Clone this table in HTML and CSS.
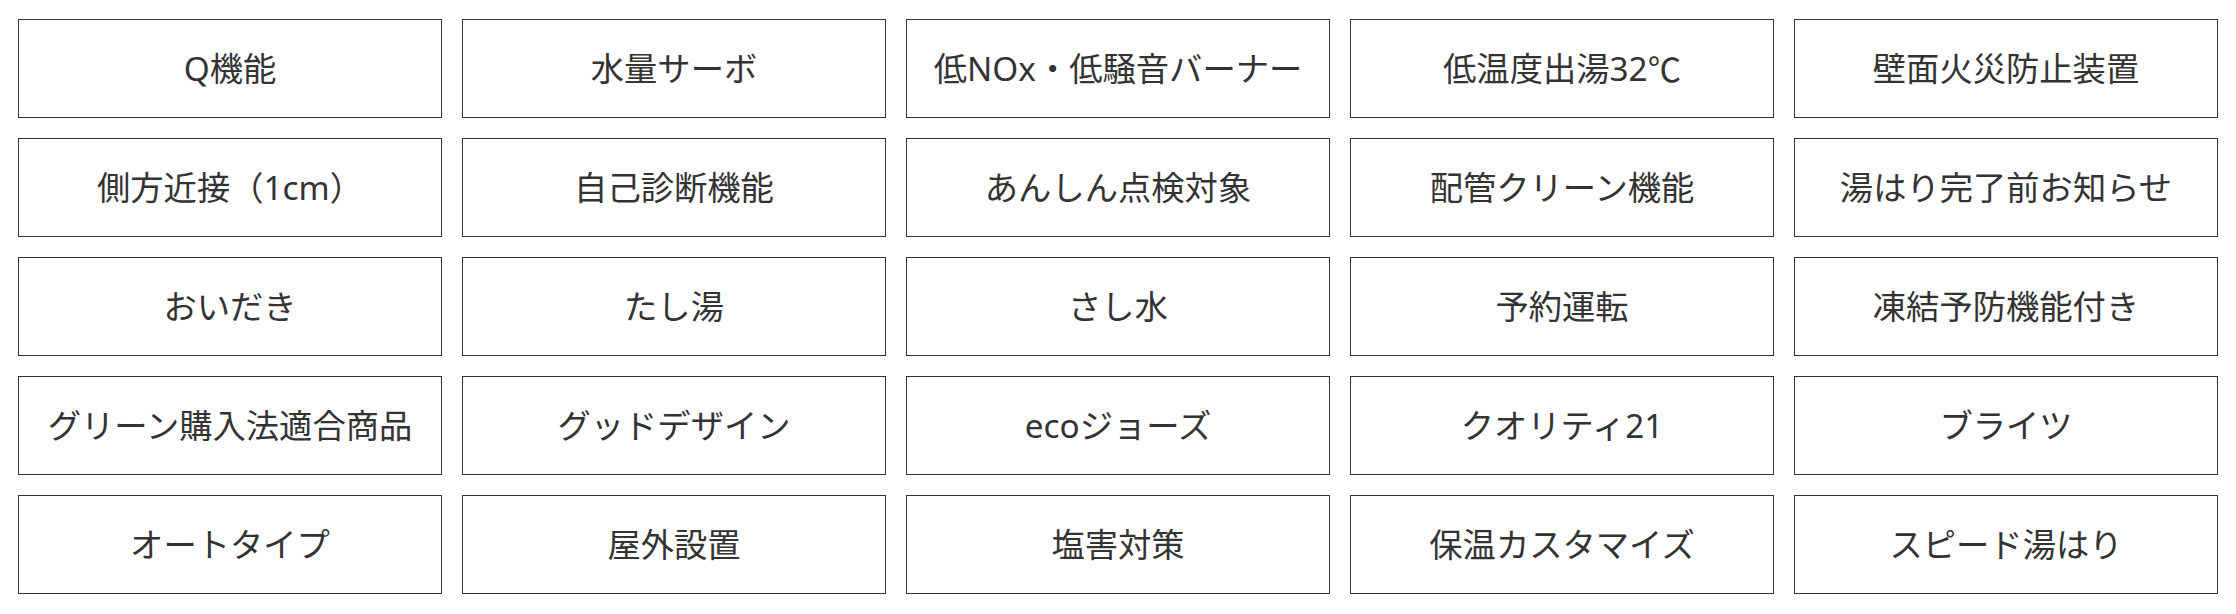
FILE: index.html
```html
<!DOCTYPE html>
<html lang="ja">
<head>
<meta charset="utf-8">
<title>機能一覧</title>
<link rel="stylesheet" href="styles.css">
</head>
<body>
<ul class="features">
  <li class="feature">Q機能</li>
  <li class="feature">水量サーボ</li>
  <li class="feature">低NOx・低騒音バーナー</li>
  <li class="feature">低温度出湯32<span class="unit">℃</span></li>
  <li class="feature">壁面火災防止装置</li>
  <li class="feature">側方近接（1cm）</li>
  <li class="feature">自己診断機能</li>
  <li class="feature">あんしん点検対象</li>
  <li class="feature">配管クリーン機能</li>
  <li class="feature">湯はり完了前お知らせ</li>
  <li class="feature">おいだき</li>
  <li class="feature">たし湯</li>
  <li class="feature">さし水</li>
  <li class="feature">予約運転</li>
  <li class="feature">凍結予防機能付き</li>
  <li class="feature">グリーン購入法適合商品</li>
  <li class="feature">グッドデザイン</li>
  <li class="feature">ecoジョーズ</li>
  <li class="feature">クオリティ21</li>
  <li class="feature">ブライツ</li>
  <li class="feature">オートタイプ</li>
  <li class="feature">屋外設置</li>
  <li class="feature">塩害対策</li>
  <li class="feature">保温カスタマイズ</li>
  <li class="feature">スピード湯はり</li>
</ul>
</body>
</html>
```

FILE: styles.css
```css
html, body {
  margin: 0;
  padding: 0;
  background: #ffffff;
}

body {
  font-family: "Noto Sans", "Noto Sans CJK JP", sans-serif;
  color: #333333;
}

.features {
  list-style: none;
  margin: 0;
  padding: 19px 18px;
  display: grid;
  grid-template-columns: repeat(5, 1fr);
  grid-auto-rows: 99px;
  gap: 20px 20px;
}

.feature {
  box-sizing: border-box;
  border: 1px solid #333333;
  display: flex;
  align-items: center;
  justify-content: center;
  font-size: 33.3px;
  line-height: 1.4;
  white-space: nowrap;
}

.unit {
  font-family: "Noto Sans CJK JP", sans-serif;
}
```
